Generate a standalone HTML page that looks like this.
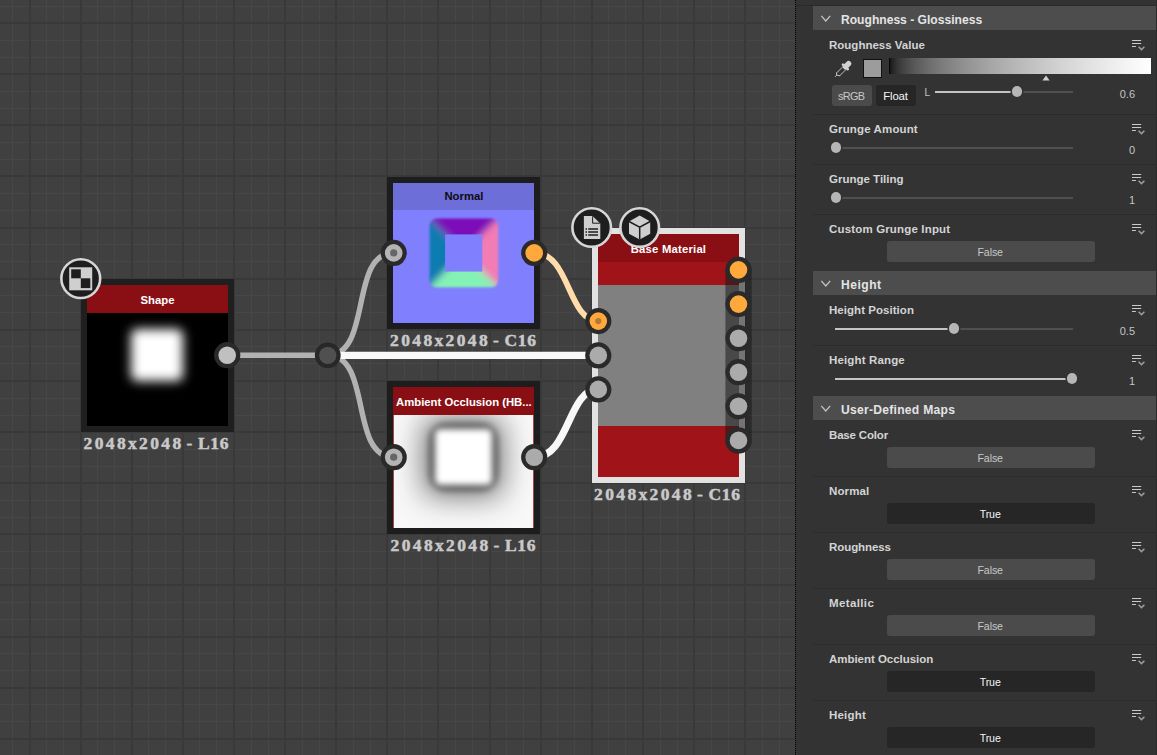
<!DOCTYPE html>
<html>
<head>
<meta charset="utf-8">
<style>
html,body{margin:0;padding:0;}
body{width:1157px;height:755px;overflow:hidden;position:relative;background:#404040;font-family:"Liberation Sans",sans-serif;}
#graph{position:absolute;left:0;top:0;width:795px;height:755px;overflow:hidden;background-color:#404040;
}
#gsvg{position:absolute;left:0;top:0;}
.node{position:absolute;box-sizing:border-box;border:6px solid #1f1f1f;background:#000;}
.title{position:absolute;left:0;top:0;right:0;height:28px;line-height:30px;text-align:center;font-weight:bold;font-size:11.3px;color:#fff;white-space:nowrap;overflow:hidden;}
.nlabel{position:absolute;font-family:"Liberation Serif",serif;font-weight:bold;font-size:17.5px;letter-spacing:2.35px;word-spacing:-3.6px;color:#c9c9c9;white-space:nowrap;text-align:center;width:200px;text-shadow:0 0 1px #777;-webkit-text-stroke:0.35px #c9c9c9;}
#panel{position:absolute;left:796px;top:0;width:361px;height:755px;background:#333333;}
#pdiv{position:absolute;left:795px;top:0;width:1px;height:755px;background:repeating-linear-gradient(to bottom,#000 0,#000 1px,#333 1px,#333 2px);}
.hdr{position:absolute;left:16px;right:1px;height:24px;background:#4d4d4d;color:#e4e4e4;font-size:12.1px;font-weight:bold;line-height:28px;}
.hdr span{position:absolute;left:28px;top:0;white-space:nowrap;}
.hdr svg{position:absolute;left:7px;top:8px;}
.plabel{position:absolute;left:32px;font-size:11.5px;font-weight:bold;color:#d4d4d4;white-space:nowrap;line-height:12px;}
.sep{position:absolute;left:16px;right:0;height:1px;background:#2b2b2b;box-shadow:0 0 0 0.5px #363636;}
.menu{position:absolute;left:334px;width:14px;height:12px;}
.btn{position:absolute;left:90px;width:208px;height:21px;border-radius:3px;background:#4b4b4b;color:#c8c8c8;font-size:10.6px;letter-spacing:-0.1px;line-height:22.4px;text-align:center;text-indent:-1.6px;}
.btn.on{background:#262626;color:#f4f4f4;}
.val{position:absolute;right:22px;font-size:11px;color:#c4c4c4;line-height:12px;text-align:right;}
.trk{position:absolute;height:2px;background:#505050;}
.trk.f{background:#c4c4c4;}
.knob{position:absolute;width:10.7px;height:10.7px;border-radius:50%;background:#b6b6b6;box-shadow:0 0 0 1.5px #333;}
</style>
</head>
<body>
<div id="graph">
<svg id="grid" width="795" height="755" viewBox="0 0 795 755" style="position:absolute;left:0;top:0;" shape-rendering="crispEdges"><path d="M12.5 0V755M46.5 0V755M63.5 0V755M97.5 0V755M114.5 0V755M148.5 0V755M165.5 0V755M199.5 0V755M216.5 0V755M251.5 0V755M268.5 0V755M302.5 0V755M319.5 0V755M353.5 0V755M370.5 0V755M404.5 0V755M421.5 0V755M455.5 0V755M472.5 0V755M506.5 0V755M523.5 0V755M557.5 0V755M574.5 0V755M608.5 0V755M625.5 0V755M660.5 0V755M677.5 0V755M711.5 0V755M728.5 0V755M762.5 0V755M779.5 0V755M0 6.5H795M0 40.5H795M0 57.5H795M0 91.5H795M0 108.5H795M0 142.5H795M0 159.5H795M0 193.5H795M0 210.5H795M0 244.5H795M0 261.5H795M0 295.5H795M0 312.5H795M0 346.5H795M0 363.5H795M0 398.5H795M0 415.5H795M0 449.5H795M0 466.5H795M0 500.5H795M0 517.5H795M0 551.5H795M0 568.5H795M0 602.5H795M0 619.5H795M0 653.5H795M0 670.5H795M0 704.5H795M0 721.5H795M0 755.5H795" stroke="#474747" stroke-width="1" fill="none"/><path d="M30 0V755M81 0V755M132 0V755M183 0V755M234 0V755M285 0V755M336 0V755M387 0V755M438 0V755M490 0V755M541 0V755M592 0V755M643 0V755M694 0V755M745 0V755M0 23H795M0 74H795M0 125H795M0 176H795M0 228H795M0 279H795M0 330H795M0 381H795M0 432H795M0 483H795M0 534H795M0 585H795M0 637H795M0 688H795M0 739H795" stroke="#393939" stroke-width="2" fill="none"/></svg>
<svg id="gsvg" width="795" height="755" viewBox="0 0 795 755">
 <!-- wires -->
 <g fill="none" stroke-linecap="round">
  <path d="M227 355.3 H327" stroke="#b2b2b2" stroke-width="5.5"/>
  <path d="M327.7 355.3 C372.5 355.3 349 252.8 393.7 252.8" stroke="#b2b2b2" stroke-width="5.4"/>
  <path d="M327.7 355.3 C372.5 355.3 349 457.2 393.7 457.2" stroke="#b2b2b2" stroke-width="5.4"/>
  <path d="M334 355.4 H598" stroke="#f9f9f9" stroke-width="7.2" stroke-linecap="butt"/>
  <path d="M534.4 252.7 C569.9 252.7 567.7 320.9 598.3 320.9" stroke="#ffdcaa" stroke-width="5.8"/>
  <path d="M534.2 457.2 C569.7 457.2 567.5 389.4 598.3 389.4" stroke="#f8f8f8" stroke-width="7.2"/>
 </g>
</svg>

<!-- Shape node -->
<div class="node" style="left:81px;top:279px;width:153px;height:153px;background:#000;">
 <div class="title" style="background:#8a0f14;">Shape</div>
 <div style="position:absolute;left:44.2px;top:44.1px;width:52px;height:52px;background:#fff;border-radius:6px;filter:blur(5.4px);"></div>
</div>
<div class="nlabel" style="left:56.4px;top:433.2px;">2048x2048 - <span style="letter-spacing:0.7px">L16</span></div>

<!-- Normal node -->
<div class="node" style="left:387.3px;top:176.5px;width:153.2px;height:152.5px;background:#8080ff;border-left-width:6.5px;border-color:#1d1d1d;">
 <div class="title" style="background:#6e6ed8;color:#0c0c14;height:27.2px;line-height:27.8px;">Normal</div>
 <svg style="position:absolute;left:30.7px;top:30.6px;" width="80" height="80" viewBox="0 0 80 80">
  <defs><filter id="nb" x="-20%" y="-20%" width="140%" height="140%"><feGaussianBlur stdDeviation="3.6"/></filter>
  <filter id="nb2" x="-20%" y="-20%" width="140%" height="140%"><feGaussianBlur stdDeviation="1.3"/></filter>
  <mask id="nm"><rect x="0" y="0" width="80" height="80" fill="#000"/><rect x="5.6" y="5.6" width="68.6" height="68.6" rx="7" ry="7" fill="#fff" filter="url(#nb2)"/></mask></defs>
  <g mask="url(#nm)"><g filter="url(#nb)">
   <polygon points="-10,-10 90,-10 39.5,39.5" fill="#7d10b8"/>
   <polygon points="90,-10 90,90 39.5,39.5" fill="#f27cb4"/>
   <polygon points="90,90 -10,90 39.5,39.5" fill="#84f2b4"/>
   <polygon points="-10,90 -10,-10 39.5,39.5" fill="#0f7cb0"/>
  </g></g>
  <rect x="21.1" y="21.4" width="37.2" height="37.2" fill="#8080ff"/>
 </svg>
</div>
<div class="nlabel" style="left:363.4px;top:330.2px;">2048x2048 - <span style="letter-spacing:0.7px">C16</span></div>

<!-- AO node -->
<div class="node" style="left:387.3px;top:381px;width:153.2px;height:152.5px;background:#fff;border-left-width:6.5px;border-color:#1d1d1d;">
 <div style="position:absolute;left:0;top:0;right:0;bottom:0;background:#f8f8f8;overflow:hidden;">
  <div style="position:absolute;left:31.2px;top:31.5px;width:78px;height:77px;border-radius:10px;background:rgba(20,20,20,0.6);filter:blur(15px);"></div>
  <div style="position:absolute;left:36px;top:36.3px;width:68.4px;height:67.4px;border-radius:16px;background:rgba(20,20,20,0.46);filter:blur(3.2px);"></div>
  <div style="position:absolute;left:41.7px;top:42px;width:57px;height:56px;border-radius:5px;background:#fff;filter:blur(3.4px);"></div>
  <div style="position:absolute;left:0;top:0;bottom:0;width:1px;background:rgba(138,15,20,0.75);"></div>
  <div style="position:absolute;right:0;top:0;bottom:0;width:1px;background:rgba(138,15,20,0.75);"></div>
 </div>
 <div class="title" style="background:#8a0f14;">Ambient Occlusion (HB...</div>
</div>
<div class="nlabel" style="left:363.4px;top:535.2px;">2048x2048 - <span style="letter-spacing:0.7px">L16</span></div>

<!-- Base Material node -->
<div class="node" style="left:592px;top:227.5px;width:153px;height:255.5px;border-color:#e2e2e2;background:#808080;">
 <div style="position:absolute;left:0;top:0;right:0;height:51px;background:#a01318;"></div>
 <div style="position:absolute;left:0;bottom:0;right:0;height:51px;background:#a01318;"></div>
 <div class="title" style="background:#8a0f14;line-height:30px;letter-spacing:0.2px;">Base Material</div>
</div>
<div class="nlabel" style="left:567.4px;top:484.2px;">2048x2048 - <span style="letter-spacing:0.7px">C16</span></div>

<svg id="gsvg2" width="795" height="755" viewBox="0 0 795 755" style="position:absolute;left:0;top:0;">
 <!-- connector bar -->
 <rect x="725.4" y="256.8" width="26.3" height="196.8" rx="13.15" fill="rgba(25,25,25,0.55)"/>
 <g>
  <!-- right connectors of base material -->
  <circle cx="738.5" cy="269.9" r="13.1" fill="#2a2a2a"/><circle cx="738.5" cy="269.9" r="8.8" fill="#ffa83c"/>
  <circle cx="738.5" cy="304.1" r="13.1" fill="#2a2a2a"/><circle cx="738.5" cy="304.1" r="8.8" fill="#ffa83c"/>
  <circle cx="738.5" cy="338.2" r="13.1" fill="#2a2a2a"/><circle cx="738.5" cy="338.2" r="8.8" fill="#ababab"/>
  <circle cx="738.5" cy="372.2" r="13.1" fill="#2a2a2a"/><circle cx="738.5" cy="372.2" r="8.8" fill="#ababab"/>
  <circle cx="738.5" cy="406.3" r="13.1" fill="#2a2a2a"/><circle cx="738.5" cy="406.3" r="8.8" fill="#ababab"/>
  <circle cx="738.5" cy="440.4" r="13.1" fill="#2a2a2a"/><circle cx="738.5" cy="440.4" r="8.8" fill="#ababab"/>
  <!-- left connectors of base material -->
  <circle cx="598.3" cy="321.1" r="13.1" fill="#2a2a2a"/><circle cx="598.3" cy="321.1" r="8.8" fill="#ffa83c"/><circle cx="598.3" cy="321.1" r="3.1" fill="#b47832"/>
  <circle cx="598.3" cy="355.4" r="13.1" fill="#2a2a2a"/><circle cx="598.3" cy="355.4" r="8.8" fill="#ababab"/>
  <circle cx="598.3" cy="389.4" r="13.1" fill="#2a2a2a"/><circle cx="598.3" cy="389.4" r="8.8" fill="#ababab"/>
  <!-- shape out -->
  <circle cx="227.2" cy="355.2" r="13.1" fill="#2a2a2a"/><circle cx="227.2" cy="355.2" r="8.8" fill="#c0c0c0"/>
  <!-- dot -->
  <circle cx="327.75" cy="355.3" r="12.9" fill="#282828"/><circle cx="327.75" cy="355.3" r="8.65" fill="#505050"/>
  <!-- normal in/out -->
  <circle cx="393.7" cy="252.9" r="13.1" fill="#2a2a2a"/><circle cx="393.7" cy="252.9" r="8.8" fill="#b4b4b4"/><circle cx="393.7" cy="252.9" r="3.6" fill="#666"/>
  <circle cx="534.2" cy="252.9" r="13.1" fill="#2a2a2a"/><circle cx="534.2" cy="252.9" r="8.8" fill="#ffa83c"/>
  <!-- AO in/out -->
  <circle cx="393.7" cy="457.2" r="13.1" fill="#2a2a2a"/><circle cx="393.7" cy="457.2" r="8.8" fill="#b4b4b4"/><circle cx="393.7" cy="457.2" r="3.6" fill="#666"/>
  <circle cx="534.2" cy="457.2" r="13.1" fill="#2a2a2a"/><circle cx="534.2" cy="457.2" r="8.8" fill="#ababab"/>
 </g>
 <!-- icon: checker on shape -->
 <g>
  <circle cx="80.75" cy="278.6" r="19.4" fill="#1e1e1e" stroke="#d6d6d6" stroke-width="2.6"/>
  <rect x="69.2" y="267.3" width="23" height="23" fill="#cfcfcf"/>
  <rect x="71.2" y="269.3" width="9.6" height="9" fill="#1e1e1e"/>
  <rect x="80.8" y="278.3" width="9.5" height="9.8" fill="#1e1e1e"/>
 </g>
 <!-- icon: doc -->
 <g>
  <circle cx="591.7" cy="227.5" r="19.3" fill="#1e1e1e" stroke="#d6d6d6" stroke-width="2.6"/>
  <path d="M583.9 216 H592.5 L600.3 223.4 V239 H583.9 Z" fill="#cfcfcf"/>
    <path d="M592.6 216.3 V223.2 H599.9" fill="none" stroke="#1e1e1e" stroke-width="1"/>
  <g stroke="#1e1e1e" stroke-width="1.35">
   <path d="M585.5 229 H587 M588.2 229 H598"/>
   <path d="M585.5 232 H587 M588.2 232 H598"/>
   <path d="M585.5 235 H587 M588.2 235 H598"/>
  </g>
 </g>
 <!-- icon: cube -->
 <g>
  <circle cx="639.7" cy="227.5" r="19.3" fill="#1e1e1e" stroke="#d6d6d6" stroke-width="2.6"/>
  <path d="M639.7 215.6 L650.2 221.5 V233.8 L639.7 239.4 L629 233.8 V221.5 Z" fill="#cfcfcf"/>
  <path d="M629 221.5 L639.7 227.2 L650.2 221.5 M639.7 227.2 V239.4" fill="none" stroke="#1e1e1e" stroke-width="1.5"/>
 </g>
</svg>
</div>

<div id="pdiv"></div>
<div id="panel">
 <div style="position:absolute;left:0;top:4.5px;right:0;height:1.2px;background:#2a2a2a;"></div><div style="position:absolute;right:0;top:0;width:1px;height:755px;background:#2b2b2b;"></div><div id="pin" style="position:absolute;left:1px;top:0;width:360px;height:755px;">
<div class="hdr" style="top:6px"><svg width="12" height="9" viewBox="0 0 12 9"><path d="M1.3 1.9 L5.75 7 L10.2 1.9" stroke="#c4c4c4" stroke-width="1.3" fill="none"/></svg><span style="letter-spacing:0px">Roughness - Glossiness</span></div>
<div class="plabel" style="top:39px;letter-spacing:0.000px">Roughness Value</div>
<svg class="menu" style="top:39px" viewBox="0 0 14 12" shape-rendering="auto"><path d="M1 1.5 H10.2 M1 4.5 H10.2 M1 7.5 H4.9" stroke="#cacaca" stroke-width="1" fill="none"/><path d="M7.6 7.7 L10.5 10.6 L13.4 7.7" stroke="#9c9c9c" stroke-width="1.5" fill="none"/></svg>
<svg style="position:absolute;left:29px;top:54px" width="30" height="28" viewBox="0 0 30 28">
<path d="M10.5 19 L17.3 12.3 M13.8 21.6 L20.5 15 M10.5 19 L10.6 21.2 L13.8 21.6" fill="none" stroke="#cdcdcd" stroke-width="0.9" stroke-linecap="round" stroke-linejoin="round"/>
<path d="M9.3 22.6 L10.6 21.3" stroke="#cdcdcd" stroke-width="0.9" stroke-linecap="round"/>
<path d="M17 10.6 L21.8 15.2" stroke="#d2d2d2" stroke-width="2.6" stroke-linecap="round"/>
<path d="M19.6 12.7 L22.6 9.6" stroke="#d2d2d2" stroke-width="5.4" stroke-linecap="round"/>
</svg>
<div style="position:absolute;left:66px;top:59px;width:17px;height:17px;border:1px solid #101010;background:#9c9c9c;"></div>
<div style="position:absolute;left:92px;top:58px;width:262px;height:16px;background:linear-gradient(to right,rgb(0,0,0) 0%,rgb(23,23,23) 0.5%,rgb(31,31,31) 1.0%,rgb(43,43,43) 2.0%,rgb(52,52,52) 3.0%,rgb(65,65,65) 5%,rgb(90,90,90) 10%,rgb(108,108,108) 15%,rgb(123,123,123) 20%,rgb(136,136,136) 25%,rgb(148,148,148) 30%,rgb(158,158,158) 35%,rgb(168,168,168) 40%,rgb(177,177,177) 45%,rgb(186,186,186) 50%,rgb(194,194,194) 55%,rgb(202,202,202) 60%,rgb(210,210,210) 65%,rgb(217,217,217) 70%,rgb(224,224,224) 75%,rgb(230,230,230) 80%,rgb(237,237,237) 85%,rgb(243,243,243) 90%,rgb(249,249,249) 95%,rgb(255,255,255) 100%);"></div>
<svg style="position:absolute;left:245px;top:74.5px" width="8" height="6" viewBox="0 0 8 6"><path d="M0.4 5.6 L4 0.4 L7.6 5.6 Z" fill="#cfcfcf"/></svg>
<div class="btn" style="left:35px;top:85px;width:40px;letter-spacing:-0.7px;font-size:10.9px;">sRGB</div>
<div class="btn on" style="left:79px;top:85px;width:40px;font-size:11.3px;text-indent:-1px;">Float</div>
<div style="position:absolute;left:127.5px;top:86.8px;font-size:10px;color:#c4c4c4;line-height:12px;">L</div>
<div class="trk" style="left:138px;top:91px;width:138px"></div>
<div class="trk f" style="left:138px;top:91px;width:81.80000000000001px"></div>
<div class="knob" style="left:214.65px;top:86.40px"></div>
<div class="val" style="top:87.7px">0.6</div>
<div class="sep" style="top:114px"></div>
<div class="plabel" style="top:123px;letter-spacing:0.133px">Grunge Amount</div>
<svg class="menu" style="top:123px" viewBox="0 0 14 12" shape-rendering="auto"><path d="M1 1.5 H10.2 M1 4.5 H10.2 M1 7.5 H4.9" stroke="#cacaca" stroke-width="1" fill="none"/><path d="M7.6 7.7 L10.5 10.6 L13.4 7.7" stroke="#9c9c9c" stroke-width="1.5" fill="none"/></svg>
<div class="trk" style="left:38px;top:147px;width:238px"></div>
<div class="knob" style="left:33.65px;top:142.40px"></div>
<div class="val" style="top:143.7px">0</div>
<div class="sep" style="top:164px"></div>
<div class="plabel" style="top:173px;letter-spacing:0.000px">Grunge Tiling</div>
<svg class="menu" style="top:173px" viewBox="0 0 14 12" shape-rendering="auto"><path d="M1 1.5 H10.2 M1 4.5 H10.2 M1 7.5 H4.9" stroke="#cacaca" stroke-width="1" fill="none"/><path d="M7.6 7.7 L10.5 10.6 L13.4 7.7" stroke="#9c9c9c" stroke-width="1.5" fill="none"/></svg>
<div class="trk" style="left:38px;top:196.8px;width:238px"></div>
<div class="knob" style="left:33.65px;top:192.20px"></div>
<div class="val" style="top:193.5px">1</div>
<div class="sep" style="top:214px"></div>
<div class="plabel" style="top:223px;letter-spacing:0.161px">Custom Grunge Input</div>
<svg class="menu" style="top:223px" viewBox="0 0 14 12" shape-rendering="auto"><path d="M1 1.5 H10.2 M1 4.5 H10.2 M1 7.5 H4.9" stroke="#cacaca" stroke-width="1" fill="none"/><path d="M7.6 7.7 L10.5 10.6 L13.4 7.7" stroke="#9c9c9c" stroke-width="1.5" fill="none"/></svg>
<div class="btn" style="top:241px">False</div>
<div class="hdr" style="top:271px"><svg width="12" height="9" viewBox="0 0 12 9"><path d="M1.3 1.9 L5.75 7 L10.2 1.9" stroke="#c4c4c4" stroke-width="1.3" fill="none"/></svg><span style="letter-spacing:0.5px">Height</span></div>
<div class="plabel" style="top:304px;letter-spacing:0.043px">Height Position</div>
<svg class="menu" style="top:304px" viewBox="0 0 14 12" shape-rendering="auto"><path d="M1 1.5 H10.2 M1 4.5 H10.2 M1 7.5 H4.9" stroke="#cacaca" stroke-width="1" fill="none"/><path d="M7.6 7.7 L10.5 10.6 L13.4 7.7" stroke="#9c9c9c" stroke-width="1.5" fill="none"/></svg>
<div class="trk" style="left:38px;top:328px;width:238px"></div>
<div class="trk f" style="left:38px;top:328px;width:118.80000000000001px"></div>
<div class="knob" style="left:151.65px;top:323.40px"></div>
<div class="val" style="top:324.7px">0.5</div>
<div class="sep" style="top:345px"></div>
<div class="plabel" style="top:354px;letter-spacing:0.145px">Height Range</div>
<svg class="menu" style="top:354px" viewBox="0 0 14 12" shape-rendering="auto"><path d="M1 1.5 H10.2 M1 4.5 H10.2 M1 7.5 H4.9" stroke="#cacaca" stroke-width="1" fill="none"/><path d="M7.6 7.7 L10.5 10.6 L13.4 7.7" stroke="#9c9c9c" stroke-width="1.5" fill="none"/></svg>
<div class="trk" style="left:38px;top:378px;width:238px"></div>
<div class="trk f" style="left:38px;top:378px;width:236.8px"></div>
<div class="knob" style="left:269.65px;top:373.40px"></div>
<div class="val" style="top:374.7px">1</div>
<div class="hdr" style="top:396px"><svg width="12" height="9" viewBox="0 0 12 9"><path d="M1.3 1.9 L5.75 7 L10.2 1.9" stroke="#c4c4c4" stroke-width="1.3" fill="none"/></svg><span style="letter-spacing:0.27px">User-Defined Maps</span></div>
<div class="plabel" style="top:429px;letter-spacing:-0.178px">Base Color</div>
<svg class="menu" style="top:429px" viewBox="0 0 14 12" shape-rendering="auto"><path d="M1 1.5 H10.2 M1 4.5 H10.2 M1 7.5 H4.9" stroke="#cacaca" stroke-width="1" fill="none"/><path d="M7.6 7.7 L10.5 10.6 L13.4 7.7" stroke="#9c9c9c" stroke-width="1.5" fill="none"/></svg>
<div class="btn" style="top:447px">False</div>
<div class="sep" style="top:476px"></div>
<div class="plabel" style="top:485px;letter-spacing:0.120px">Normal</div>
<svg class="menu" style="top:485px" viewBox="0 0 14 12" shape-rendering="auto"><path d="M1 1.5 H10.2 M1 4.5 H10.2 M1 7.5 H4.9" stroke="#cacaca" stroke-width="1" fill="none"/><path d="M7.6 7.7 L10.5 10.6 L13.4 7.7" stroke="#9c9c9c" stroke-width="1.5" fill="none"/></svg>
<div class="btn on" style="top:503px">True</div>
<div class="sep" style="top:532px"></div>
<div class="plabel" style="top:541px;letter-spacing:-0.075px">Roughness</div>
<svg class="menu" style="top:541px" viewBox="0 0 14 12" shape-rendering="auto"><path d="M1 1.5 H10.2 M1 4.5 H10.2 M1 7.5 H4.9" stroke="#cacaca" stroke-width="1" fill="none"/><path d="M7.6 7.7 L10.5 10.6 L13.4 7.7" stroke="#9c9c9c" stroke-width="1.5" fill="none"/></svg>
<div class="btn" style="top:559px">False</div>
<div class="sep" style="top:588px"></div>
<div class="plabel" style="top:597px;letter-spacing:0.371px">Metallic</div>
<svg class="menu" style="top:597px" viewBox="0 0 14 12" shape-rendering="auto"><path d="M1 1.5 H10.2 M1 4.5 H10.2 M1 7.5 H4.9" stroke="#cacaca" stroke-width="1" fill="none"/><path d="M7.6 7.7 L10.5 10.6 L13.4 7.7" stroke="#9c9c9c" stroke-width="1.5" fill="none"/></svg>
<div class="btn" style="top:615px">False</div>
<div class="sep" style="top:644px"></div>
<div class="plabel" style="top:653px;letter-spacing:-0.037px">Ambient Occlusion</div>
<svg class="menu" style="top:653px" viewBox="0 0 14 12" shape-rendering="auto"><path d="M1 1.5 H10.2 M1 4.5 H10.2 M1 7.5 H4.9" stroke="#cacaca" stroke-width="1" fill="none"/><path d="M7.6 7.7 L10.5 10.6 L13.4 7.7" stroke="#9c9c9c" stroke-width="1.5" fill="none"/></svg>
<div class="btn on" style="top:671px">True</div>
<div class="sep" style="top:700px"></div>
<div class="plabel" style="top:709px;letter-spacing:0.200px">Height</div>
<svg class="menu" style="top:709px" viewBox="0 0 14 12" shape-rendering="auto"><path d="M1 1.5 H10.2 M1 4.5 H10.2 M1 7.5 H4.9" stroke="#cacaca" stroke-width="1" fill="none"/><path d="M7.6 7.7 L10.5 10.6 L13.4 7.7" stroke="#9c9c9c" stroke-width="1.5" fill="none"/></svg>
<div class="btn on" style="top:727px">True</div>
</div></div>
</body>
</html>
